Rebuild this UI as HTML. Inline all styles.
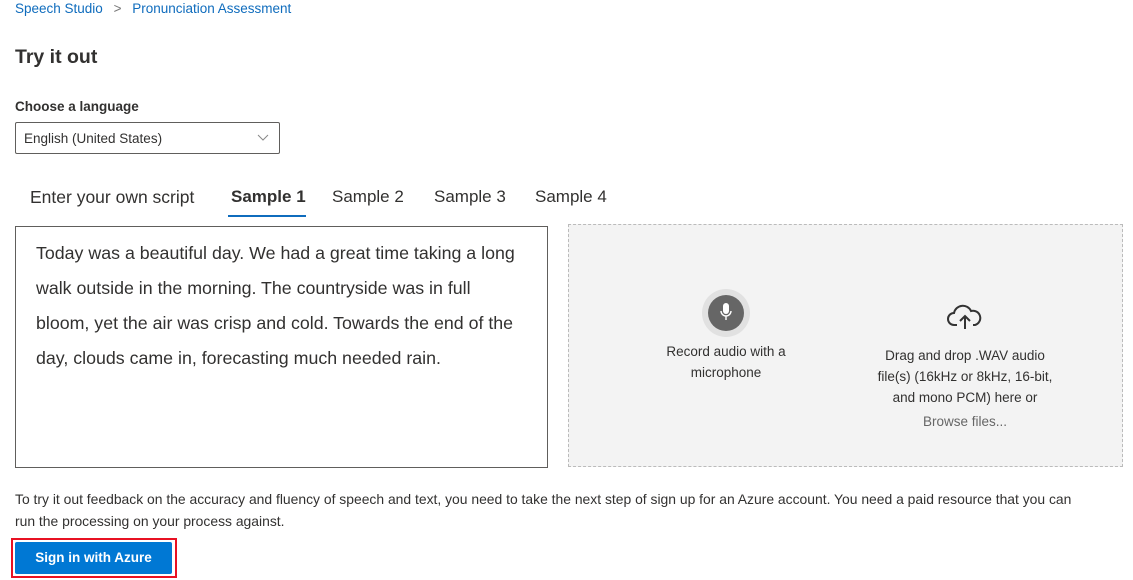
<!DOCTYPE html>
<html><head><style>
body{margin:0;width:1133px;height:580px;background:#fff;font-family:"Liberation Sans",sans-serif;color:#323130;position:relative;overflow:hidden}
.a{position:absolute;white-space:nowrap}
</style></head><body>
<div class="a" style="left:15px;top:1px;font-size:13.5px;color:#0f6cbd">Speech Studio <span style="color:#777;margin:0 7px">&gt;</span> Pronunciation Assessment</div>
<div class="a" style="left:15px;top:46px;font-size:19.5px;font-weight:bold;color:#323130">Try it out</div>
<div class="a" style="left:15px;top:99px;font-size:13.5px;font-weight:bold">Choose a language</div>
<div class="a" style="left:15px;top:122px;width:263px;height:30px;border:1px solid #605e5c;border-radius:2px"></div>
<div class="a" style="left:24px;top:131px;font-size:13.5px">English (United States)</div>
<svg class="a" style="left:257px;top:134px" width="12" height="8"><path d="M1 1l5 5 5-5" fill="none" stroke="#888" stroke-width="1"/></svg>
<div class="a" style="left:30px;top:187px;font-size:17.5px;color:#323130">Enter your own script</div>
<div class="a" style="left:231px;top:187px;font-size:17px;font-weight:bold">Sample 1</div>
<div class="a" style="left:228px;top:215px;width:78px;height:2px;background:#0f6cbd"></div>
<div class="a" style="left:332px;top:187px;font-size:17px">Sample 2</div>
<div class="a" style="left:434px;top:187px;font-size:17px">Sample 3</div>
<div class="a" style="left:535px;top:187px;font-size:17px">Sample 4</div>
<div class="a" style="left:15px;top:226px;width:531px;height:240px;border:1px solid #605e5c"></div>
<div class="a" style="left:36px;top:236px;font-size:17.8px;line-height:35px;color:#323130">Today was a beautiful day. We had a great time taking a long<br>walk outside in the morning. The countryside was in full<br>bloom, yet the air was crisp and cold. Towards the end of the<br>day, clouds came in, forecasting much needed rain.</div>
<div class="a" style="left:568px;top:224px;width:553px;height:241px;background:#f3f3f3;border:1px dashed #bbb"></div>
<div class="a" style="left:702px;top:289px;width:48px;height:48px;border-radius:50%;background:#e1e1e1"></div>
<div class="a" style="left:708px;top:295px;width:36px;height:36px;border-radius:50%;background:#666"></div>
<svg class="a" style="left:716px;top:301px" width="20" height="24"><rect x="7" y="2" width="6" height="11" rx="3" fill="#fff"/><path d="M5 10a5 5 0 0 0 10 0M10 15v4" fill="none" stroke="#fff" stroke-width="1.4"/></svg>
<div class="a" style="left:640px;top:341px;width:172px;text-align:center;font-size:13.5px;line-height:21px">Record audio with a<br>microphone</div>
<svg class="a" style="left:946px;top:302px" width="38" height="28"><path d="M11 23H8a6 6 0 0 1 0-12 9 9 0 0 1 17-2 7 7 0 0 1 4 14h-2" fill="none" stroke="#333" stroke-width="2"/><path d="M19 27V14M14 19l5-5 5 5" fill="none" stroke="#333" stroke-width="2"/></svg>
<div class="a" style="left:860px;top:345px;width:210px;text-align:center;font-size:13.5px;line-height:21px">Drag and drop .WAV audio<br>file(s) (16kHz or 8kHz, 16-bit,<br>and mono PCM) here or</div>
<div class="a" style="left:860px;top:414px;width:210px;text-align:center;font-size:13.5px;color:#666">Browse files...</div>
<div class="a" style="left:15px;top:488px;font-size:13.9px;line-height:22px">To try it out feedback on the accuracy and fluency of speech and text, you need to take the next step of sign up for an Azure account. You need a paid resource that you can<br>run the processing on your process against.</div>
<div class="a" style="left:11px;top:538px;width:162px;height:36px;border:2px solid #e81123"></div>
<div class="a" style="left:15px;top:542px;width:157px;height:32px;background:#0078d4;border-radius:2px;color:#fff;font-size:13.5px;font-weight:bold;text-align:center;line-height:32px">Sign in with Azure</div>
</body></html>
